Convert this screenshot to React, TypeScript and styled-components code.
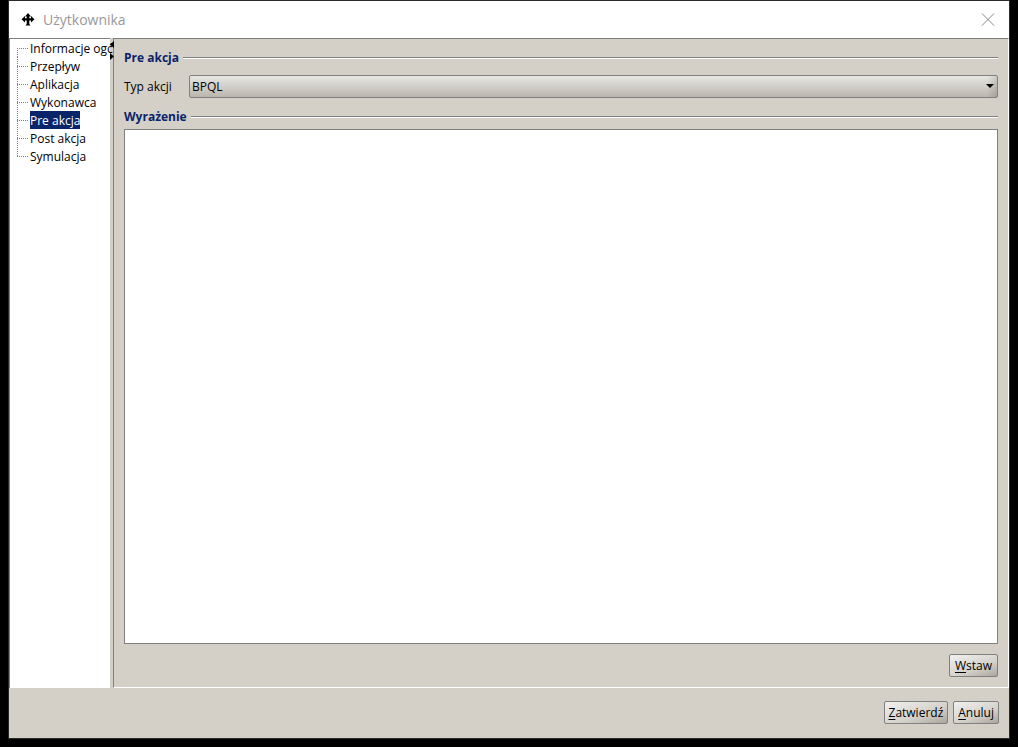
import React, { useState } from "react";
import styled, { createGlobalStyle } from "styled-components";

const GlobalStyle = createGlobalStyle`
  *, *::before, *::after { box-sizing: border-box; }
  body {
    margin: 0;
    background: #000;
    color: #000;
    font: 12px/18px "Open Sans", "Segoe UI", sans-serif;
  }
  button, select, textarea { font: inherit; color: inherit; }
`;

const Desktop = styled.div`
  display: flex;
  min-height: 100vh;
  padding: 0 8px 8px;
`;

const Window = styled.div`
  flex: 1;
  min-width: 0;
  display: flex;
  flex-direction: column;
  border: 1px solid #2b2b2b;
  background: #d4d0c8;
`;

const TitleBar = styled.header`
  display: flex;
  align-items: center;
  gap: 8px;
  height: 37px;
  padding: 0 14px 0 12px;
  background: #fff;
`;

const Title = styled.h1`
  flex: 1;
  margin: 0;
  font-size: 14px;
  line-height: 20px;
  font-weight: 400;
  color: #999;
`;

const CloseButton = styled.button`
  display: flex;
  padding: 0;
  border: 0;
  background: none;
`;

const Body = styled.div`
  flex: 1;
  display: flex;
  min-height: 0;
`;

const TreePanel = styled.nav`
  flex: none;
  width: 101px;
  background: #fff;
  border-left: 1px solid #808080;
  border-top: 1px solid #808080;
`;

const TreeList = styled.ul`
  margin: 0;
  padding: 0 0 0 7px;
  list-style: none;
`;

const TreeItem = styled.li`
  display: flex;
  height: 18px;
`;

const Branch = styled.svg`
  flex: none;
  width: 13px;
  height: 18px;
`;

const TreeLabel = styled.button<{ $selected: boolean }>`
  flex: none;
  height: 18px;
  padding: 1px 0 0;
  border: 0;
  line-height: 17px;
  white-space: nowrap;
  background: ${(p) => (p.$selected ? "#0a246a" : "transparent")};
  color: ${(p) => (p.$selected ? "#fff" : "#000")};
`;

const Splitter = styled.div`
  flex: none;
  position: relative;
  width: 3px;
`;

const SplitterArrows = styled.svg`
  position: absolute;
  top: 3px;
  left: 0;
`;

const Content = styled.main`
  flex: 1;
  min-width: 0;
  display: flex;
  flex-direction: column;
  padding: 10px;
  border: 1px solid;
  border-color: #808080 #fff #fff #808080;
`;

const SectionHeading = styled.h2`
  display: flex;
  align-items: center;
  gap: 4px;
  margin: 0;
  font-size: 12px;
  line-height: 18px;
  color: #0a246a;

  &::after {
    content: "";
    flex: 1;
    border-top: 1px solid #808080;
    border-bottom: 1px solid #fff;
  }
`;

const Field = styled.div`
  display: flex;
  align-items: center;
  margin: 8px 0 10px;
`;

const FieldLabel = styled.label`
  flex: none;
  width: 65px;
`;

const SelectBox = styled.div`
  flex: 1;
  position: relative;
  display: flex;
`;

const Select = styled.select`
  appearance: none;
  width: 100%;
  height: 23px;
  padding: 1px 20px 0 2px;
  border: 1px solid #808080;
  border-radius: 2px;
  background: linear-gradient(to left, rgba(0, 0, 0, 0.12), transparent 10px),
    linear-gradient(#e8e7e3, #bab6ae);
`;

const SelectArrow = styled.svg`
  position: absolute;
  right: 4px;
  top: 9px;
  pointer-events: none;
`;

const Expression = styled.textarea`
  flex: 1;
  display: block;
  width: 100%;
  min-height: 120px;
  margin: 3px 0 10px;
  padding: 2px;
  border: 1px solid #808080;
  border-radius: 0;
  background: #fff;
  resize: none;
  outline: none;
`;

const ButtonRow = styled.div`
  display: flex;
  justify-content: flex-end;
  gap: 5px;
`;

const Footer = styled(ButtonRow)`
  height: 50px;
  padding: 13px 10px;
`;

const PushButton = styled.button`
  height: 23px;
  padding: 0 4px;
  border: 1px solid #808080;
  border-radius: 2px;
  line-height: 20px;
  background: linear-gradient(160deg, #f2f1ef, #d4d1cb 60%, #aaa69e);

  u { text-underline-offset: 2px; }
`;

const WideButton = styled(PushButton)`
  padding: 0 5px;
`;

const items = [
  "Informacje ogć",
  "Przepływ",
  "Aplikacja",
  "Wykonawca",
  "Pre akcja",
  "Post akcja",
  "Symulacja",
];

export default function App() {
  const [selected, setSelected] = useState("Pre akcja");
  const last = items.length - 1;

  return (
    <Desktop>
      <GlobalStyle />
      <Window>
        <TitleBar>
          <svg width="14" height="14" viewBox="0 0 14 14" aria-hidden="true">
            <path
              d="M7 0 10 3.500H8.300V5.200H10V3L13.500 6.300 10 9.500V7.500H8.300V11L9.500 12.500H4.500L5.700 11V7.500H4V9.500L0.500 6.300 4 3V5.200H5.700V3.500H4Z"
              fill="#000"
            />
          </svg>
          <Title>Użytkownika</Title>
          <CloseButton aria-label="Zamknij">
            <svg width="14" height="14" viewBox="0 0 14 14">
              <path d="M1 0.500 13 12.500M13 0.500 1 12.500" stroke="#888" fill="none" />
            </svg>
          </CloseButton>
        </TitleBar>
        <Body>
          <TreePanel>
            <TreeList>
              {items.map((item, i) => (
                <TreeItem key={item}>
                  <Branch viewBox="0 0 13 18" aria-hidden="true">
                    <path
                      d={`M0.5 ${i === 0 ? 9 : 0}V${i === last ? 10 : 18}M0 9.5H12`}
                      stroke="#808080"
                      strokeDasharray="1 1"
                      fill="none"
                    />
                  </Branch>
                  <TreeLabel
                    $selected={item === selected}
                    onClick={() => setSelected(item)}
                  >
                    {item}
                  </TreeLabel>
                </TreeItem>
              ))}
            </TreeList>
          </TreePanel>
          <Splitter>
            <SplitterArrows width="4" height="20" viewBox="0 0 4 20" aria-hidden="true">
              <path d="M4 0V7L0 3.500ZM0 12V19L4 15.500Z" fill="#000" />
            </SplitterArrows>
          </Splitter>
          <Content>
            <SectionHeading>Pre akcja</SectionHeading>
            <Field>
              <FieldLabel htmlFor="action-type">Typ akcji</FieldLabel>
              <SelectBox>
                <Select id="action-type" defaultValue="BPQL">
                  <option>BPQL</option>
                </Select>
                <SelectArrow width="8" height="4" viewBox="0 0 8 4" aria-hidden="true">
                  <path d="M0 0H8L4 4Z" fill="#000" />
                </SelectArrow>
              </SelectBox>
            </Field>
            <SectionHeading id="expression">Wyrażenie</SectionHeading>
            <Expression aria-labelledby="expression" />
            <ButtonRow>
              <WideButton>
                <u>W</u>staw
              </WideButton>
            </ButtonRow>
          </Content>
        </Body>
        <Footer>
          <PushButton>
            <u>Z</u>atwierdź
          </PushButton>
          <PushButton>
            <u>A</u>nuluj
          </PushButton>
        </Footer>
      </Window>
    </Desktop>
  );
}
